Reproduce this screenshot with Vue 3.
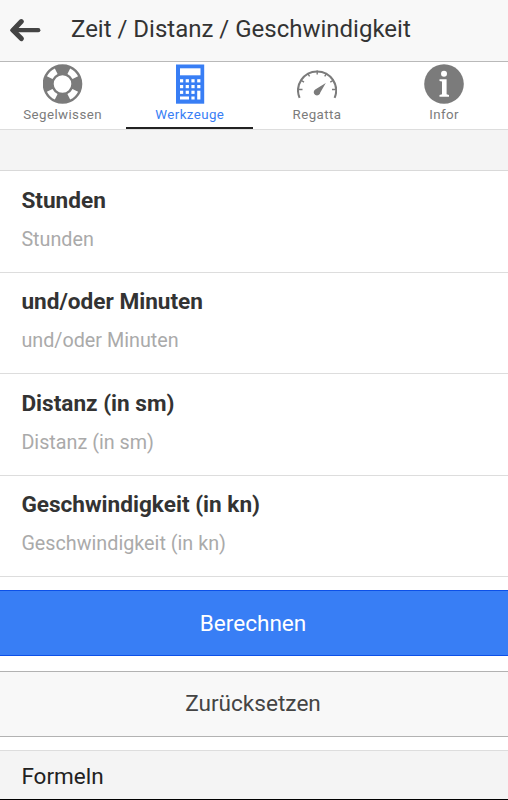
<template>
  <div class="page">
    <header class="bar">
      <button class="back" aria-label="Zurück">
        <svg width="32" height="26" viewBox="0 0 32 26">
          <path d="M8 14.2H29.3" fill="none" stroke="#444" stroke-width="4.2" stroke-linecap="round" />
          <path d="M12.3 5.6L4 14.2L12.3 22.6" fill="none" stroke="#444" stroke-width="5" stroke-linecap="round" stroke-linejoin="round" />
          <path d="M1 14.2L7 8.4V20Z" fill="#444" />
        </svg>
      </button>
      <h1 class="title">Zeit / Distanz / Geschwindigkeit</h1>
    </header>

    <nav class="tabs">
      <a
        v-for="tab in tabs"
        :key="tab.id"
        class="tab"
        :class="{ active: tab.id === activeTab }"
        @click="activeTab = tab.id"
      >
        <!-- life ring -->
        <svg v-if="tab.id === 'wissen'" class="icon" viewBox="0 0 40 40">
          <circle cx="19.5" cy="20" r="14.3" fill="none" stroke="currentColor" stroke-width="11" />
          <g fill="none" stroke="#fff" stroke-width="6.2" transform="translate(-0.5 0)">
            <path d="M26.3 7.2A14.3 14.3 0 0 1 32.8 13.7" />
            <path d="M32.8 26.3A14.3 14.3 0 0 1 26.3 32.8" />
            <path d="M13.7 32.8A14.3 14.3 0 0 1 7.2 26.3" />
            <path d="M7.2 13.7A14.3 14.3 0 0 1 13.7 7.2" />
          </g>
        </svg>
        <!-- calculator -->
        <svg v-else-if="tab.id === 'werkzeuge'" class="icon" viewBox="0 0 40 40">
          <rect x="6" y="0.5" width="28.2" height="39.2" fill="currentColor" />
          <g fill="#fff">
            <rect x="10" y="4.3" width="20.5" height="7" />
            <rect v-for="k in keys" :key="k.x + '-' + k.y" :x="k.x" :y="k.y" width="3.2" height="3.2" />
            <rect x="10" y="32.5" width="9" height="3" />
            <rect x="21.4" y="32.5" width="3.2" height="3" />
            <rect x="27.2" y="26.7" width="3.2" height="8.8" />
          </g>
        </svg>
        <!-- gauge -->
        <svg v-else-if="tab.id === 'regatta'" class="icon" viewBox="0 0 40 40">
          <g fill="none" stroke="currentColor">
            <path d="M2.6 33.8A19 19 0 1 1 37.6 33.8" stroke-width="2" />
            <path d="M1.5 25.5H5.5M39 25.5H35M3.8 16.2L7 18.2M36.5 16.2L33.3 18.2M10.5 9.2L12.6 12.3M29.8 9.2L27.7 12.3M20.2 6.5V10.5" stroke-width="1.4" />
          </g>
          <path d="M28.8 19L23.3 28.4A3.3 3.3 0 1 1 18.2 25.4Z" fill="currentColor" />
        </svg>
        <!-- info -->
        <svg v-else class="icon" viewBox="0 0 40 40">
          <circle cx="20" cy="20" r="19.8" fill="currentColor" />
          <g fill="#fff">
            <circle cx="20" cy="9.7" r="3" />
            <path d="M15.5 15.2H22.6V30.2L25 31V32.8H15.5V31L18 30.2V17.6L15.5 17Z" />
          </g>
        </svg>
        <span class="tab-label">{{ tab.label }}</span>
      </a>
    </nav>

    <div class="divider"></div>

    <label v-for="field in fields" :key="field" class="field">
      <span class="field-label">{{ field }}</span>
      <input v-model="values[field]" class="field-input" type="text" :placeholder="field" />
    </label>

    <button class="button primary">Berechnen</button>
    <button class="button" @click="reset">Zurücksetzen</button>

    <div class="section">Formeln</div>
  </div>
</template>

<script setup>
import { reactive, ref } from "vue";

const tabs = [
  { id: "wissen", label: "Segelwissen" },
  { id: "werkzeuge", label: "Werkzeuge" },
  { id: "regatta", label: "Regatta" },
  { id: "info", label: "Infor" }
];
const activeTab = ref("werkzeuge");

const fields = [
  "Stunden",
  "und/oder Minuten",
  "Distanz (in sm)",
  "Geschwindigkeit (in kn)"
];
const values = reactive({});

// calculator keys, the bottom row and the tall key are drawn separately
const keys = [];
for (const y of [15.2, 21, 26.7]) {
  for (const x of [10, 15.7, 21.4, 27.2]) {
    if (y === 26.7 && x === 27.2) continue;
    keys.push({ x, y });
  }
}

function reset() {
  fields.forEach((f) => (values[f] = ""));
}
</script>

<style>
body {
  background: #fff;
}
</style>

<style scoped>
.page {
  box-sizing: border-box;
  display: flex;
  flex-direction: column;
  height: 800px;
  overflow: hidden;
  border-bottom: 1px solid #000;
  font-family: Roboto, sans-serif;
  color: #333;
  background: #fff;
}

.bar {
  box-sizing: border-box;
  flex: none;
  display: flex;
  align-items: center;
  height: 62px;
  padding: 0 0 3px 9px;
  background: #f8f8f8;
  border-bottom: 1px solid #b9b9b9;
}
.back {
  display: flex;
  padding: 0;
  border: 0;
  background: none;
}
.title {
  margin: 0 0 0 30px;
  font-size: 24px;
  font-weight: 400;
  line-height: 30px;
  white-space: nowrap;
}

.tabs {
  box-sizing: border-box;
  flex: none;
  display: flex;
  height: 68px;
  margin-left: -1px;
  border-bottom: 1px solid #ddd;
}
.tab {
  box-sizing: border-box;
  flex: none;
  display: flex;
  flex-direction: column;
  align-items: center;
  width: 127.2px;
  height: 67px;
  padding-top: 2px;
  border-bottom: 2px solid transparent;
  color: #7b7b7b;
}
.tab.active {
  color: #387ef5;
  border-bottom-color: #222;
}
.icon {
  width: 40px;
  height: 40px;
}
.tab-label {
  margin-top: 2px;
  font-size: 13.3px;
  line-height: 17px;
  letter-spacing: 0.42px;
}

.divider {
  flex: none;
  height: 40px;
  background: #f4f4f4;
  border-bottom: 1px solid #d9d9d9;
}

.field {
  box-sizing: border-box;
  flex: none;
  display: flex;
  flex-direction: column;
  height: 101.5px;
  padding: 14.6px 21.4px 0;
  border-bottom: 1px solid #ddd;
}
.field-label {
  font-size: 22.6px;
  font-weight: 700;
  line-height: 30px;
}
.field-input {
  height: 30px;
  margin-top: 8.9px;
  padding: 0;
  border: 0;
  outline: 0;
  font-family: inherit;
  font-size: 19.75px;
  background: none;
}
.field-input::placeholder {
  color: #aaa;
  opacity: 1;
}

.button {
  box-sizing: border-box;
  flex: none;
  height: 66px;
  margin-top: 14.5px;
  padding: 0 2px 0 0;
  border: 1px solid #b2b2b2;
  border-width: 1px 0;
  font-family: inherit;
  font-size: 22.6px;
  color: #444;
  background: #f8f8f8;
}
.button.primary {
  margin-top: 13px;
  color: #fff;
  background: #387ef5;
  border-color: #0c50e8;
}

.section {
  box-sizing: border-box;
  flex: 1;
  margin-top: 13px;
  padding: 10px 21.4px 0;
  font-size: 22.5px;
  line-height: 30px;
  color: #222;
  background: #f4f4f4;
  border-top: 1px solid #ddd;
}
</style>
